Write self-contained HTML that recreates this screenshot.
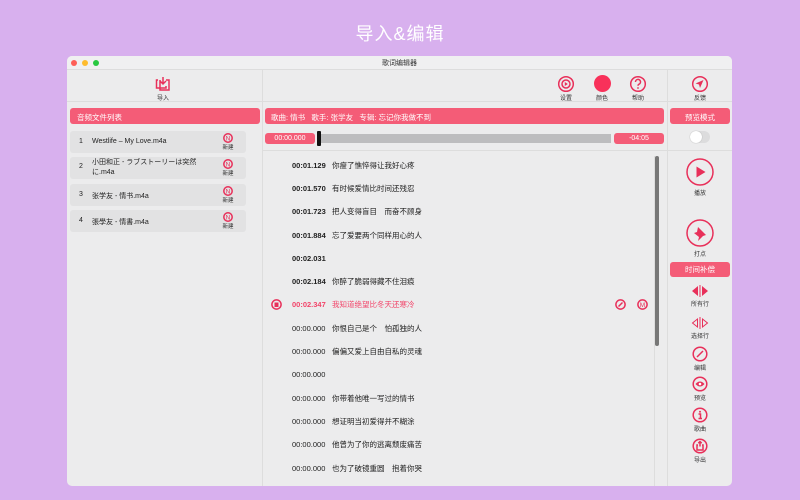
<!DOCTYPE html>
<html><head><meta charset="utf-8"><style>
*{margin:0;padding:0;box-sizing:border-box}
body{width:800px;height:500px;background:#d8b0ee;position:relative;overflow:hidden;font-family:"Liberation Sans","Noto Sans CJK SC",sans-serif;font-size:7px;color:#222}
.a{position:absolute}
.win{left:67px;top:56px;width:665px;height:430px;background:#ececed;border-radius:5px;overflow:hidden}
.pink{background:#f45c77;color:#fff;border-radius:3px;font-size:7.5px}
.ic{stroke:#e8305a;fill:none;stroke-width:1.5}
.lab{font-size:6px;color:#333;text-align:center}
.row{position:absolute;left:225px;font-size:7.5px;line-height:10px;height:10px}
.row b{font-weight:bold;color:#222}
.row span{position:absolute;left:40px;top:0;white-space:nowrap}
</style></head><body>
<div class="a" style="left:0;top:20px;width:800px;text-align:center;color:#fff;font-size:18px;letter-spacing:1px">导入&amp;编辑</div>
<div class="a win">
 <div class="a" style="left:0;top:0;width:665px;height:14px;background:#f0f0f1;border-bottom:1px solid #ddd"></div>
 <div class="a" style="left:4px;top:4px;width:6px;height:6px;border-radius:50%;background:#fe5f57"></div>
 <div class="a" style="left:15px;top:4px;width:6px;height:6px;border-radius:50%;background:#febc2e"></div>
 <div class="a" style="left:26px;top:4px;width:6px;height:6px;border-radius:50%;background:#28c840"></div>
 <div class="a" style="left:0;top:2px;width:665px;text-align:center;font-size:7px;color:#333">歌词编辑器</div>
 <div class="a" style="left:0;top:45px;width:665px;height:1px;background:#ddd"></div>
 <div class="a" style="left:195px;top:14px;width:1px;height:416px;background:#ddd"></div>
 <div class="a" style="left:600px;top:14px;width:1px;height:416px;background:#ddd"></div>
 <svg class="a" style="left:88px;top:20px" width="16" height="16" viewBox="0 0 16 16"><path class="ic" d="M3 4H1.5V12H11V10M8 1v7M5 5l3 3 3-3M5 4V14H14V4H11"/></svg>
 <div class="a lab" style="left:83px;top:37px;width:26px">导入</div>
 <svg class="a" style="left:490px;top:19px" width="18" height="18"><circle cx="9" cy="9" r="7.3" class="ic"/><circle cx="9" cy="9" r="4" class="ic" stroke-width="1.1"/><path d="M7.8 7v4l3-2z" fill="#e8305a"/></svg>
 <div class="a lab" style="left:486px;top:37px;width:26px">设置</div>
 <div class="a" style="left:527px;top:19px;width:17px;height:17px;border-radius:50%;background:#f8315a"></div>
 <div class="a lab" style="left:522px;top:37px;width:26px">颜色</div>
 <svg class="a" style="left:562px;top:19px" width="18" height="18"><circle cx="9" cy="9" r="7.3" class="ic"/><path class="ic" d="M6.5 7a2.5 2.5 0 1 1 3.5 2.2c-.8.4-1 .9-1 1.6" stroke-width="1.3"/><circle cx="9" cy="13" r=".9" fill="#e8305a"/></svg>
 <div class="a lab" style="left:558px;top:37px;width:26px">帮助</div>
 <svg class="a" style="left:624px;top:19px" width="18" height="18"><circle cx="9" cy="9" r="7.3" class="ic"/><path d="M4.5 8.5l8-3.5-3.5 8-1-3.5z" fill="#e8305a"/></svg>
 <div class="a lab" style="left:620px;top:37px;width:26px">反馈</div>
 <div class="a pink" style="left:3px;top:52px;width:190px;height:16px;padding:4px 7px">音频文件列表</div>
 <div class="a pink" style="left:198px;top:52px;width:399px;height:16px;padding:4px 6px">歌曲: 情书&nbsp;&nbsp; 歌手: 张学友&nbsp;&nbsp; 专辑: 忘记你我做不到</div>
 <div class="a pink" style="left:603px;top:52px;width:60px;height:16px;padding:4px 0;text-align:center">预览模式</div>
 <div class="a" style="left:3px;top:75px;width:176px;height:22px;background:#e2e2e3;border-radius:3px"></div>
 <div class="a" style="left:3px;top:101px;width:176px;height:22px;background:#e2e2e3;border-radius:3px"></div>
 <div class="a" style="left:3px;top:128px;width:176px;height:22px;background:#e2e2e3;border-radius:3px"></div>
 <div class="a" style="left:3px;top:154px;width:176px;height:22px;background:#e2e2e3;border-radius:3px"></div>
 <div class="a" style="left:12px;top:82px">1</div><div class="a" style="left:25px;top:82px">Westlife – My Love.m4a</div>
 <div class="a" style="left:12px;top:107px">2</div><div class="a" style="left:25px;top:102px;width:120px;line-height:10px">小田和正 - ラブストーリーは突然に.m4a</div>
 <div class="a" style="left:12px;top:135px">3</div><div class="a" style="left:25px;top:135px">张学友 - 情书.m4a</div>
 <div class="a" style="left:12px;top:161px">4</div><div class="a" style="left:25px;top:161px">張學友 - 情書.m4a</div>
 <svg class="a" style="left:156px;top:77px" width="10" height="10"><circle cx="5" cy="5" r="4.2" class="ic" stroke-width="1"/><text x="5" y="7.5" font-size="6.5" text-anchor="middle" fill="#e8305a" font-family="Liberation Sans">N</text></svg>
 <div class="a lab" style="left:151px;top:87px;width:20px;font-size:5.5px">新建</div>
 <svg class="a" style="left:156px;top:103px" width="10" height="10"><circle cx="5" cy="5" r="4.2" class="ic" stroke-width="1"/><text x="5" y="7.5" font-size="6.5" text-anchor="middle" fill="#e8305a" font-family="Liberation Sans">N</text></svg>
 <div class="a lab" style="left:151px;top:113px;width:20px;font-size:5.5px">新建</div>
 <svg class="a" style="left:156px;top:130px" width="10" height="10"><circle cx="5" cy="5" r="4.2" class="ic" stroke-width="1"/><text x="5" y="7.5" font-size="6.5" text-anchor="middle" fill="#e8305a" font-family="Liberation Sans">N</text></svg>
 <div class="a lab" style="left:151px;top:140px;width:20px;font-size:5.5px">新建</div>
 <svg class="a" style="left:156px;top:156px" width="10" height="10"><circle cx="5" cy="5" r="4.2" class="ic" stroke-width="1"/><text x="5" y="7.5" font-size="6.5" text-anchor="middle" fill="#e8305a" font-family="Liberation Sans">N</text></svg>
 <div class="a lab" style="left:151px;top:166px;width:20px;font-size:5.5px">新建</div>
 <div class="a pink" style="left:198px;top:77px;width:50px;height:11px;text-align:center;font-size:7px;line-height:11px">00:00.000</div>
 <div class="a" style="left:251px;top:78px;width:293px;height:9px;background:#bdbdbf"></div>
 <div class="a" style="left:250px;top:75px;width:4px;height:15px;background:#111;border-radius:1px"></div>
 <div class="a pink" style="left:547px;top:77px;width:50px;height:11px;text-align:center;font-size:7px;line-height:11px">-04:05</div>
 <div class="a" style="left:196px;top:94px;width:404px;height:1px;background:#ddd"></div>
 <div class="a" style="left:601px;top:94px;width:64px;height:1px;background:#ddd"></div>
 <div class="a" style="left:623px;top:75px;width:20px;height:12px;border-radius:6px;background:#dcdcdd"></div>
 <div class="a" style="left:623px;top:75px;width:12px;height:12px;border-radius:50%;background:#fff;box-shadow:0 0 1px #999"></div>
 <div class="a" style="left:588px;top:100px;width:4px;height:190px;background:#777;border-radius:2px"></div>
 <div class="a" style="left:587px;top:100px;width:1px;height:330px;background:#ddd"></div>
 <div class="row" style="top:105px"><b>00:01.129</b><span>你瘦了憔悴得让我好心疼</span></div>
 <div class="row" style="top:128px"><b>00:01.570</b><span>有时候爱情比时间还残忍</span></div>
 <div class="row" style="top:151px"><b>00:01.723</b><span>把人变得盲目　而奋不顾身</span></div>
 <div class="row" style="top:175px"><b>00:01.884</b><span>忘了爱要两个同样用心的人</span></div>
 <div class="row" style="top:198px"><b>00:02.031</b></div>
 <div class="row" style="top:221px"><b>00:02.184</b><span>你醉了脆弱得藏不住泪痕</span></div>
 <div class="row" style="top:244px;color:#f2456a"><b style="color:#f2456a">00:02.347</b><span>我知道绝望比冬天还寒冷</span></div>
 <div class="row" style="top:268px">00:00.000<span>你恨自己是个　怕孤独的人</span></div>
 <div class="row" style="top:291px">00:00.000<span>偏偏又爱上自由自私的灵魂</span></div>
 <div class="row" style="top:314px">00:00.000</div>
 <div class="row" style="top:338px">00:00.000<span>你带着他唯一写过的情书</span></div>
 <div class="row" style="top:361px">00:00.000<span>想证明当初爱得并不糊涂</span></div>
 <div class="row" style="top:384px">00:00.000<span>他曾为了你的逃离颓废痛苦</span></div>
 <div class="row" style="top:408px">00:00.000<span>也为了破镜重圆　抱着你哭</span></div>
 <svg class="a" style="left:204px;top:243px" width="11" height="11"><circle cx="5.5" cy="5.5" r="4.6" class="ic" stroke-width="1"/><rect x="3.5" y="3.5" width="4" height="4.5" fill="#e8305a"/></svg>
 <svg class="a" style="left:548px;top:243px" width="11" height="11"><circle cx="5.5" cy="5.5" r="4.6" class="ic" stroke-width="1"/><path d="M3.5 7.5L7.5 3.5" class="ic" stroke-width="1"/></svg>
 <svg class="a" style="left:570px;top:243px" width="11" height="11"><circle cx="5.5" cy="5.5" r="4.6" class="ic" stroke-width="1"/><text x="5.5" y="8" font-size="6.5" text-anchor="middle" fill="#e8305a" font-family="Liberation Sans">M</text></svg>
 <svg class="a" style="left:618px;top:101px" width="30" height="30"><circle cx="15" cy="15" r="13" class="ic" stroke-width="2"/><path d="M11.5 9.5v11l9-5.5z" fill="#e8305a"/></svg>
 <div class="a lab" style="left:620px;top:132px;width:26px">播放</div>
 <svg class="a" style="left:618px;top:162px" width="30" height="30"><circle cx="15" cy="15" r="13" class="ic" stroke-width="2"/><path d="M13 9l8 8-3 1-5 5 1-4-5-4 3-1 1-5z" fill="#e8305a"/></svg>
 <div class="a lab" style="left:620px;top:193px;width:26px">打点</div>
 <div class="a pink" style="left:603px;top:206px;width:60px;height:15px;text-align:center;line-height:15px">时间补偿</div>
 <svg class="a" style="left:623px;top:228px" width="20" height="14"><path d="M8 2v10L2 7z M12 2v10l6-5z" fill="#e8305a"/><path d="M10 1v12" stroke="#e8305a"/></svg>
 <div class="a lab" style="left:620px;top:243px;width:26px">所有行</div>
 <svg class="a" style="left:623px;top:260px" width="20" height="14"><path d="M7.5 3v8L2.5 7z M12.5 3v8l5-4z" fill="none" stroke="#e8305a"/><path d="M10 1v12" stroke="#e8305a"/></svg>
 <div class="a lab" style="left:620px;top:275px;width:26px">选择行</div>
 <svg class="a" style="left:625px;top:290px" width="16" height="16"><circle cx="8" cy="8" r="6.8" class="ic" stroke-width="1.3"/><path d="M5 11L11 5" class="ic" stroke-width="1.3"/></svg>
 <div class="a lab" style="left:620px;top:307px;width:26px">编辑</div>
 <svg class="a" style="left:625px;top:320px" width="16" height="16"><circle cx="8" cy="8" r="6.8" class="ic" stroke-width="1.3"/><path d="M3.5 8q4.5-5 9 0q-4.5 5-9 0z" fill="#e8305a"/><circle cx="8" cy="8" r="1.3" fill="#fff"/></svg>
 <div class="a lab" style="left:620px;top:337px;width:26px">预览</div>
 <svg class="a" style="left:625px;top:351px" width="16" height="16"><circle cx="8" cy="8" r="6.8" class="ic" stroke-width="1.3"/><circle cx="8" cy="4.8" r="1" fill="#e8305a"/><path d="M6.5 7h2v4.5M6.5 11.5h3.5" class="ic" stroke-width="1.2"/></svg>
 <div class="a lab" style="left:620px;top:368px;width:26px">歌曲</div>
 <svg class="a" style="left:625px;top:382px" width="16" height="16"><circle cx="8" cy="8" r="6.8" class="ic" stroke-width="1.3"/><path d="M6 7H5v5h6V7h-1M8 3.5v5M6.3 5.2L8 3.5l1.7 1.7" class="ic" stroke-width="1.1"/></svg>
 <div class="a lab" style="left:620px;top:399px;width:26px">导出</div>
</div>
</body></html>
